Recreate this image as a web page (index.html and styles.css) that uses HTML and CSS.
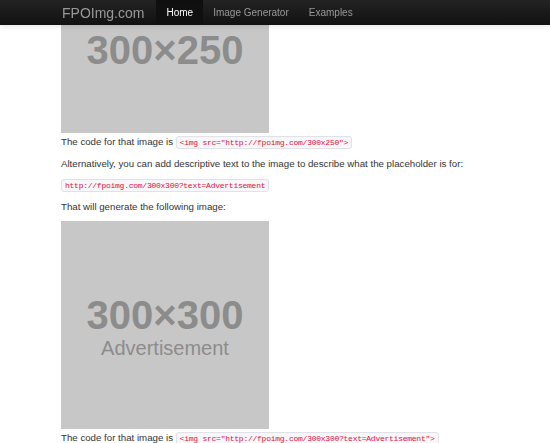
FILE: index.html
```html
<!DOCTYPE html>
<html lang="en">
<head>
  <meta charset="UTF-8" />
  <title>FPOImg.com</title>
  <link rel="stylesheet" href="styles.css">
</head>
<body>

  <div class="navbar">
    <div class="navbar-inner">
      <a class="brand" href="#">FPOImg.com</a>
      <ul class="nav">
        <li class="active"><a href="#">Home</a></li>
        <li><a href="#">Image Generator</a></li>
        <li><a href="#">Examples</a></li>
      </ul>
    </div>
  </div>

  <div class="container">
    <div class="placeholder ph-250">
      <span class="ph-size">300×250</span>
    </div>
    <p>The code for that image is <code>&lt;img src="http://fpoimg.com/300x250"&gt;</code></p>
    <p>Alternatively, you can add descriptive text to the image to describe what the placeholder is for:</p>
    <p><code>http://fpoimg.com/300x300?text=Advertisement</code></p>
    <p>That will generate the following image:</p>
    <div class="placeholder ph-300">
      <span class="ph-size">300×300</span>
      <span class="ph-text">Advertisement</span>
    </div>
    <p>The code for that image is <code>&lt;img src="http://fpoimg.com/300x300?text=Advertisement"&gt;</code></p>
  </div>

</body>
</html>
```

FILE: styles.css
```css
body {
  margin: 0;
  font-family: "Liberation Sans", Arial, sans-serif;
  font-size: 9.7px;
  line-height: 14px;
  color: #333;
  background: #fff;
  overflow: hidden;
}

/* fixed top bar */
.navbar {
  position: fixed;
  top: 0;
  left: 0;
  right: 0;
  z-index: 10;
}
.navbar-inner {
  display: flex;
  align-items: stretch;
  height: 25px;
  padding-left: 62px;
  background: linear-gradient(to bottom, #232323, #111);
  box-shadow: 0 1px 6px rgba(0, 0, 0, 0.12);
}
.brand {
  display: flex;
  align-items: center;
  margin-right: 12px;
  font-size: 14px;
  color: #999;
  text-decoration: none;
}
.nav {
  display: flex;
  margin: 0;
  padding: 0;
  list-style: none;
}
.nav li a {
  display: flex;
  align-items: center;
  height: 100%;
  padding: 0 10px;
  font-size: 10px;
  color: #999;
  text-decoration: none;
}
.nav li.active a {
  color: #fff;
  background: #111;
  box-shadow: inset 0 3px 8px rgba(0, 0, 0, 0.12);
}

.container {
  padding-left: 61px;
}
.container p {
  margin: 0 0 7px;
}

code {
  font-family: "Liberation Mono", Consolas, monospace;
  font-size: 8px;
  letter-spacing: -0.25px;
  color: #d14;
  background: #f7f7f9;
  border: 1px solid #e1e1e8;
  border-radius: 3px;
  padding: 1px 3px;
}

/* grey image placeholders */
.placeholder {
  display: flex;
  flex-direction: column;
  align-items: center;
  justify-content: center;
  box-sizing: border-box;
  width: 208px;
  background: #c7c7c7;
  color: #8c8c8c;
  margin-bottom: 2px;
}
.ph-250 {
  height: 173px;
  margin-top: -40px;
  padding-top: 6px;
}
.ph-300 {
  height: 208px;
  margin-top: 5px;
  padding-top: 8px;
}
.ph-size {
  font-size: 40px;
  font-weight: bold;
  line-height: 38px;
}
.ph-text {
  font-size: 20px;
  line-height: 28px;
}
```
